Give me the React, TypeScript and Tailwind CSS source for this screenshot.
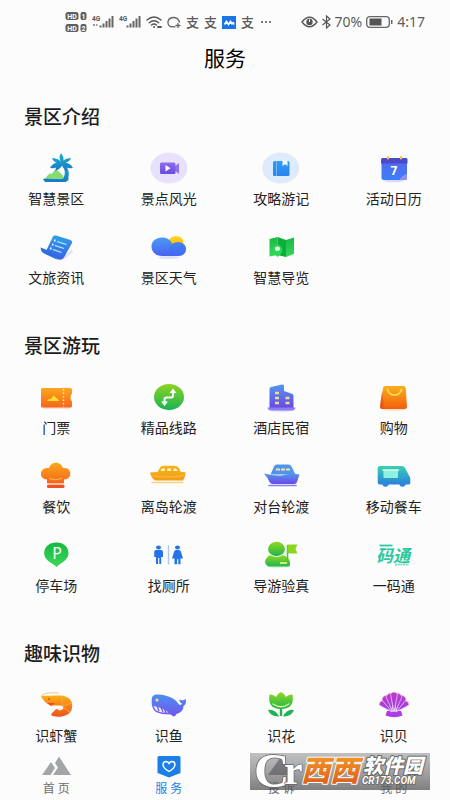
import type { ReactNode } from "react";

const cjk = "font-['Noto_Sans','Noto_Sans_CJK_SC',sans-serif]";

function Grad({ id, from, to }: { id: string; from: string; to: string }) {
  return (
    <linearGradient id={id} x1="0" y1="0" x2="0" y2="1">
      <stop offset="0" stopColor={from} />
      <stop offset="1" stopColor={to} />
    </linearGradient>
  );
}

function Palette() {
  return (
    <svg className="absolute h-0 w-0" aria-hidden="true">
      <defs>
        <Grad id="palm" from="#1fb5c0" to="#1a76cf" />
        <Grad id="sea" from="#7fdc7a" to="#1aa5a6" />
        <Grad id="violet" from="#8f6df0" to="#6a4be0" />
        <Grad id="book" from="#2f9df5" to="#2a84ee" />
        <Grad id="cal" from="#5a63f0" to="#3b7ff5" />
        <Grad id="news" from="#2f9fe6" to="#3a62ea" />
        <Grad id="cloud" from="#4b9af3" to="#4a63f6" />
        <Grad id="sun" from="#ffd52a" to="#f7b500" />
        <Grad id="map" from="#17b93f" to="#36d75c" />
        <Grad id="orange" from="#fba81c" to="#f6641b" />
        <Grad id="bag" from="#fcb01a" to="#f35c0e" />
        <Grad id="route" from="#8ed321" to="#18b455" />
        <Grad id="hotel" from="#5198ee" to="#6a48e6" />
        <Grad id="boat" from="#f7b416" to="#f49a1c" />
        <Grad id="truck" from="#37d3ae" to="#2a80dd" />
        <Grad id="leaf" from="#93d81d" to="#1db552" />
        <Grad id="park" from="#12b93f" to="#3fd65d" />
        <Grad id="whale" from="#4b8ff2" to="#7354ee" />
        <Grad id="shell" from="#c23ac6" to="#8f3ff0" />
        <Grad id="shrimp" from="#fbb015" to="#f04f1c" />
      </defs>
    </svg>
  );
}

const art: Record<string, ReactNode> = {
  palm: (
    <>
      <path d="M7 30q6-3 12-3t14 2l-1 3q-12 2-22 0z" fill="url(#sea)" />
      <path d="M10 29q3-6 6-4q3-6 6-3q5 3 6 8q-9 1-18-1z" fill="#86dc72" />
      <path d="M26 14c6 3 8 9 6 16l-2 3H9l-2-3h20c3-5 2-10-1-14z" fill="url(#palm)" />
      <path d="M26 15C23 10 23 7 25 4q4 5 2 11zM26 15q1-6 9-6q-1 4-9 6zM26 14q8-1 11 5q-7 1-11-4zM26 15q-2-6-10-6q1 5 10 6zM26 14q-8-2-12 5q7 1 12-4zM26 14q-6 2-7 8q6-2 8-7zM26 14q6 2 5 8q-5-3-5-7z" fill="url(#palm)" />
    </>
  ),
  video: (
    <>
      <ellipse cx="20" cy="19" rx="18.5" ry="15.5" fill="#e7e1fb" />
      <path d="M25 18l5-4v11l-5-4z" fill="#8d74ee" />
      <rect x="11" y="13.5" width="15.5" height="11.5" rx="1.5" fill="url(#violet)" />
      <path d="M16.5 16l5 3.3-5 3.3z" fill="#fff" />
    </>
  ),
  guide: (
    <>
      <ellipse cx="19.7" cy="19" rx="18.5" ry="15.5" fill="#deebfb" />
      <rect x="12" y="12" width="16.5" height="15" rx="1.5" fill="url(#book)" />
      <path d="M15.5 12v15" stroke="#83c1fa" strokeWidth="0.8" />
      <path d="M21.5 11.5h5v5.500l-2.500-1.700-2.500 1.700z" fill="#f2f8ff" />
    </>
  ),
  calendar: (
    <>
      <ellipse cx="20" cy="31.500" rx="10" ry="1.800" fill="#d5d9fb" />
      <rect x="7.500" y="9" width="25.500" height="22" rx="2" fill="url(#cal)" />
      <path d="M7 10.500q0-1.500 1.500-1.500h23.500q1.500 0 1.500 1.500v4H7z" fill="#4b4bc9" />
      <path d="M14 8v1.500M27 8v1.500" stroke="#f8c33a" strokeWidth="2.200" strokeLinecap="round" />
      <path d="M33 25v6h-7q0-4 7-6z" fill="#8f8df6" />
      <text x="20" y="26" textAnchor="middle" fontSize="12" fontWeight="700" fill="#fff" fontFamily="Noto Sans, sans-serif">7</text>
    </>
  ),
  news: (
    <>
      <path d="M24 32l12-11q2 3-1 5l-8 6z" fill="#e3e3fb" />
      <path d="M17 8.500q1-1.500 3-1l14.500 4.500q2 1 1.500 3L28 29.500Q25 33 21.500 31L10 23z" fill="url(#news)" />
      <path d="M4.700 19.500L11 22l10 5q-1.500 3.500 1 5L8 25.500q-3.500-2.500-3.300-6z" fill="#2d6fdc" />
      <path d="M21 13.500l9.500 3M19 17.500l9 3M17 21.500l8.500 3" stroke="#c9f1ff" strokeWidth="1.100" />
      <path d="M18 12.500h1.500M16 16.700h1.500M14 20.500h1.500" stroke="#fff" strokeWidth="1.800" />
    </>
  ),
  weather: (
    <>
      <ellipse cx="20" cy="29.500" rx="11" ry="1.500" fill="#dde1fc" />
      <ellipse cx="27" cy="14" rx="7.500" ry="6" fill="url(#sun)" />
      <path d="M13 9.500c5 0 9 2.500 10 6.500 6-4 14-1 14 5 0 4-3 7-8 7H13C7 28 2.500 24 2.500 18.500S7 9.500 13 9.500z" fill="url(#cloud)" />
      <path d="M23 16q-3 2-3 6 0 4 3 6h6c5 0 8-3 8-7 0-6-8-9-14-5z" fill="#3a72ef" opacity=".45" />
    </>
  ),
  map: (
    <>
      <path d="M8.500 11l8-2v18l-8 1.500z" fill="url(#map)" />
      <path d="M16.500 9l8.500 3v17l-8.500-2z" fill="#0fae3c" />
      <path d="M25 12l8-2.500V26l-8 3z" fill="url(#map)" />
      <path d="M16.500 29l-4-4q-2-5 1-7 3-2 6 0 3 3 1 7z" fill="#2cd657" />
      <ellipse cx="16.500" cy="20.800" rx="2.600" ry="2.200" fill="#e5fbe9" />
    </>
  ),
  ticket: (
    <>
      <rect x="7" y="27" width="27" height="4" rx="2" fill="#fde0cf" />
      <path d="M6.500 10H34q2 0 2 1.500v4q-1.500 1-1.500 4t1.500 4V28q0 1.500-2 1.500H6.500Q5 29.500 5 28V11.500Q5 10 6.500 10z" fill="url(#orange)" />
      <path d="M27.500 11v18" stroke="#fff1d0" strokeWidth="1.400" strokeDasharray="1.500 2" />
      <path d="M11 23q2-3 4-2l2.500-3.500 3 2.500q2 1 2.500 3z" fill="#ffe02d" />
    </>
  ),
  route: (
    <>
      <ellipse cx="20" cy="19" rx="15" ry="13" fill="url(#route)" />
      <path d="M15.500 25v-3.500q0-2 2-2H22q2 0 2-2V14" fill="none" stroke="#fff" strokeWidth="1.900" />
      <path d="M12 23.500h7L15.500 28zM20.500 15h7L24 10.500z" fill="#fff" />
    </>
  ),
  hotel: (
    <>
      <ellipse cx="20.500" cy="32" rx="12" ry="1.800" fill="#dfd9fb" />
      <path d="M8.500 30V11q0-1.500 1.500-2l11-2.500q2-.5 2 1.500v5l8.500 3q1 .5 1 2v12z" fill="url(#hotel)" />
      <path d="M6.500 29.500h28q-.5 3-3 3H10q-3 0-3.500-3z" fill="#8b7df2" />
      <path d="M14 15h4M14 20h4M14 25h4M24.500 20h4M24.500 25h4" stroke="#f5dc8b" strokeWidth="2.600" />
    </>
  ),
  bag: (
    <>
      <ellipse cx="20" cy="31.500" rx="12" ry="1.500" fill="#fbe0cf" />
      <path d="M11 8h18.500q2 0 2.200 2L33 28.500q0 2.500-2.500 2.500H9q-3 0-3-2.500L9 10q.3-2 2-2z" fill="url(#bag)" />
      <path d="M8 13l2 18H8q-2-.5-2-2.500z" fill="#de5314" opacity=".7" />
      <path d="M13.500 11.500q1.500 5.500 7 5.500t7-5.500" fill="none" stroke="#ffe05a" strokeWidth="1.700" strokeLinecap="round" />
    </>
  ),
  chef: (
    <>
      <path d="M11 22.500c-4 0-6.500-3-6-6.500s4-5.500 8-5c1-3.500 4-5.300 7-5.300s6 2 7 5.300c4-.5 7 1.500 7.300 5s-2 6.500-6.300 6.500v4H11z" fill="url(#orange)" />
      <path d="M13 21.500q6 2.500 13 0" stroke="#ffc04b" fill="none" />
      <rect x="11" y="27.500" width="17.500" height="3.500" rx="1.500" fill="#f0511f" />
      <path d="M11 27h17" stroke="#ffe0cb" strokeWidth=".9" />
    </>
  ),
  boat: (
    <>
      <path d="M3 25.500h31" stroke="#f8d27d" strokeWidth="1.500" strokeLinecap="round" />
      <path d="M1 15.500l7.500-.5 3-5q1-1.300 3-1.300h11q5 .5 6 6l5 .5q.5 4-2.500 8.300H6q-4-3-5-8z" fill="url(#boat)" />
      <path d="M2 18.500q14 3 33 0" fill="none" stroke="#f6bd3b" strokeWidth="1.200" />
      <path d="M11.500 14h3.800l1-2.500h-3.500zM18 14h4v-2.500h-3.500zM24.500 14h4.500l-2-2.500h-2.500z" fill="#fff5cf" />
    </>
  ),
  ship: (
    <>
      <path d="M8 28.500h27" stroke="#7f81ee" strokeWidth="1.600" strokeLinecap="round" />
      <path d="M9.500 17.500l3.500-8q.8-2 3-2h11.500q2 0 3 2l4 8z" fill="#4f95ed" />
      <path d="M3 16.500q12 3 20 1.500 8-2 15.500-.5L36 25q-.5 2-3 2H12q-2.500 0-3.500-2-1.500-4-5.500-8.500z" fill="url(#hotel)" />
      <path d="M15 12.500h14" stroke="#f7e19f" strokeWidth="2.200" strokeDasharray="4 1" />
    </>
  ),
  truck: (
    <>
      <path d="M6 9h22q2 0 3 2l4 7.500q1.300 1.500 1.300 3.500v4q0 1.500-1.800 1.500h-29Q3.700 27.500 3.700 25V11Q3.700 9 6 9z" fill="url(#truck)" />
      <ellipse cx="11.500" cy="27" rx="3" ry="2.800" fill="#2c86dc" />
      <ellipse cx="28.500" cy="27" rx="3" ry="2.800" fill="#2c86dc" />
      <rect x="9.500" y="13" width="14.500" height="8" fill="#8ff2de" />
      <path d="M8.500 13h16.500" stroke="#e4fff8" strokeWidth="1.400" />
      <path d="M28.500 13l3.500 6h-3.500z" fill="#35a9c9" />
    </>
  ),
  parking: (
    <>
      <path d="M20.500 6.500c7 0 12 4.500 12 10.500 0 5.500-4.500 8.500-9 11.500l-3 2.500-3-2.500c-5-3-9.300-6-9.300-11.500 0-6 5-10.500 12.300-10.500z" fill="url(#park)" />
      <text x="21" y="23" textAnchor="middle" fontSize="16" fill="#fff" fontFamily="Noto Sans, sans-serif">P</text>
    </>
  ),
  toilet: (
    <>
      <path d="M19.500 9.500v19" stroke="#a9c9f5" strokeWidth="1.400" />
      <ellipse cx="9.500" cy="11.500" rx="2.500" ry="2" fill="#2573e8" />
      <path d="M7 14h5q2 0 2 2v5h-1.800v7H10.300v-6h-1.200v6H7v-7H5.200v-5q0-2 1.800-2z" fill="#2573e8" />
      <ellipse cx="28.500" cy="11.500" rx="2.500" ry="2" fill="#2573e8" />
      <path d="M27 14h3q1.500 0 2 2l2 6.500h-2.500v5.800H29.300v-5h-1.200v5H25.500v-5.800H23l2-6.500q.5-2 2-2z" fill="#2573e8" />
    </>
  ),
  person: (
    <>
      <ellipse cx="17" cy="30.500" rx="11" ry="1.500" fill="#d3f3dc" />
      <ellipse cx="15.500" cy="13" rx="8.500" ry="7.200" fill="url(#leaf)" />
      <path d="M9 19q6.500 4 13 0 6 2 7 7v3q0 1.500-2 1.500H8Q4 29 4 25.500 5 21 9 19z" fill="url(#leaf)" />
      <path d="M26.500 9v17" stroke="#49c540" strokeWidth="1.600" />
      <path d="M26.500 8.500h10L34.500 13l2 4.500h-10z" fill="#8bd520" />
      <path d="M19 27h7" stroke="#eaf76f" strokeWidth="1.700" />
    </>
  ),
  code: (
    <>
      <path d="M5.500 9.500h13" stroke="#2cc8a3" strokeWidth="1.800" />
      <text x="2" y="26" fontSize="17" fontWeight="700" fontStyle="italic" fill="#2cc8a0" fontFamily="Noto Sans CJK SC, sans-serif">码通</text>
      <path d="M21 28.500h14" stroke="#7de0c0" strokeWidth="1.800" strokeDasharray="2 .7" />
    </>
  ),
  shrimp: (
    <>
      <path d="M6 9q4-3 17-2" stroke="#e6cf9a" fill="none" strokeWidth="1" />
      <path d="M4.700 9.500C10 10.500 17 9 25 9.500q11 1 11.300 10.500-.5 9-10.300 10.500-5 .7-9.500-.5-2-1-1-2.500l4.500-4.500q2-.5 3 1.500 5-1 4.500-3.500-1-2-4-1.500H15Q8 17 4.700 9.500z" fill="url(#shrimp)" />
      <path d="M27 9.500q-2 5 0 10.500M36 17l-9 3M34 26l-7-5" stroke="#ffa537" strokeWidth="1" fill="none" />
      <circle cx="13" cy="13" r=".8" fill="#8a3b10" />
      <path d="M11 17h8l-4 3z" fill="#e8501b" />
    </>
  ),
  whale: (
    <>
      <path d="M2.700 13Q3 8.500 8 8.500q6-.5 14 3 5 2 7.500 6.500 2.500 2 3.500-.5-3-1.500-2.500-4l3 1 3.200-1.500Q38 18 34.500 20q0 6-7 8-.5 2-3.500 2.500l-2-2q-10 0-15-2.500-5-3-4.300-13z" fill="url(#whale)" />
      <path d="M4.500 20q8 1 15 6.500-9 .5-13-2.500z" fill="#f0edff" />
      <path d="M8 20l2 5M12 21l2 5M15.500 23l1.500 4" stroke="#7159ea" strokeWidth="1.300" />
      <circle cx="8" cy="14" r="1.500" fill="#ffe08a" />
    </>
  ),
  flower: (
    <>
      <path d="M20 20v10" stroke="#25b150" strokeWidth="2.400" />
      <path d="M7 24q7-1.500 11 6.500Q10 31 7 24zM33 24q-7-1.500-11 6.500 8 .5 11-6.500z" fill="#20b354" />
      <path d="M8.500 8.500q4-.5 6.500 2.500 2-4 5-5 3 1 5 5 2.500-3 6.500-2.500 2.500 14.500-11.500 14.500Q6 23 8.500 8.500z" fill="url(#leaf)" />
      <path d="M12 18q8 5.500 16 0" fill="none" stroke="#d8f78a" strokeWidth="1.500" strokeLinecap="round" />
    </>
  ),
  shell: (
    <>
      <path d="M13 25h14l1.500 4.500q-8 3.500-17 0z" fill="#a93ce4" />
      <g fill="url(#shell)" stroke="#f2cdf6" strokeWidth=".7">
        <path d="M18 26L5 19q0-4 4-4.500z" />
        <path d="M22 26l13-7q0-4-4-4.500z" />
        <path d="M18 26L8 14q0-4 5-5z" />
        <path d="M22 26l10-12q0-4-5-5z" />
        <path d="M19 26l-7-15q1-4 5.500-4z" />
        <path d="M21 26l7-15q-1-4-5.500-4z" />
        <path d="M20 26L16.500 8q3.500-4 7 0z" />
      </g>
    </>
  ),
};

const sections = [
  {
    title: "景区介绍",
    items: [
      ["palm", "智慧景区"],
      ["video", "景点风光"],
      ["guide", "攻略游记"],
      ["calendar", "活动日历"],
      ["news", "文旅资讯"],
      ["weather", "景区天气"],
      ["map", "智慧导览"],
    ],
  },
  {
    title: "景区游玩",
    items: [
      ["ticket", "门票"],
      ["route", "精品线路"],
      ["hotel", "酒店民宿"],
      ["bag", "购物"],
      ["chef", "餐饮"],
      ["boat", "离岛轮渡"],
      ["ship", "对台轮渡"],
      ["truck", "移动餐车"],
      ["parking", "停车场"],
      ["toilet", "找厕所"],
      ["person", "导游验真"],
      ["code", "一码通"],
    ],
  },
  {
    title: "趣味识物",
    items: [
      ["shrimp", "识虾蟹"],
      ["whale", "识鱼"],
      ["flower", "识花"],
      ["shell", "识贝"],
    ],
  },
];

function Signal({ dim }: { dim?: boolean }) {
  return (
    <svg width="22" height="14" viewBox="0 0 22 14">
      <text x="0" y="5.500" fontSize="6.500" fontWeight="700" fill="#555" fontFamily="Roboto, sans-serif">4G</text>
      {dim && <path d="M1 10h2M4 10h1.500" stroke="#777" strokeWidth="1.500" />}
      <path d="M8.500 12.500v-2M11.500 12.500v-4M14.500 12.500V6M17.500 12.500V3.500M20.500 12.500V1" stroke="#666" strokeWidth="2" />
    </svg>
  );
}

function HdBadges() {
  return (
    <svg width="22" height="22" viewBox="0 0 22 22">
      {[1, 2].map((n) => (
        <g key={n}>
          <rect x="0.500" y={n * 12 - 11} width="13" height="8" rx="2.500" fill="#5d5d5d" />
          <rect x="15.500" y={n * 12 - 11} width="6" height="8" rx="2" fill="#5d5d5d" />
          <text x="7" y={n * 12 - 4.500} textAnchor="middle" fontSize="7" fontWeight="700" fill="#fff" fontFamily="Roboto, sans-serif">HD</text>
          <text x="18.500" y={n * 12 - 4.500} textAnchor="middle" fontSize="7" fontWeight="700" fill="#fff" fontFamily="Roboto, sans-serif">{n}</text>
        </g>
      ))}
    </svg>
  );
}

function StatusBar() {
  const pay = <span className="text-[13px] leading-4 font-medium">支</span>;
  return (
    <header className="flex h-11 items-center justify-between pr-[25px] pl-[65px] text-[#5c5c5c]">
      <div className="flex items-center gap-[5px]">
        <HdBadges />
        <Signal dim />
        <Signal />
        <svg width="16" height="14" viewBox="0 0 16 14" fill="none" stroke="#555" strokeWidth="1.400" strokeLinecap="round">
          <path d="M1 5q7-6 14 0M3.300 7.700q4.700-4 9.400 0M5.500 10q2.500-2 5 0" />
          <path d="M8 12h.1M12 12h3" strokeWidth="1.800" />
        </svg>
        <svg width="14" height="14" viewBox="0 0 14 14" fill="none" stroke="#666" strokeWidth="1.300" strokeLinecap="round">
          <path d="M3 11.500q-2.500-2-2-5Q2 2.500 6.500 2.500T12.500 7M3 11.500l5 .3M11 8.500v4M9 10.500h4" />
        </svg>
        {pay}
        {pay}
        <svg width="14" height="13" viewBox="0 0 14 13">
          <rect width="14" height="13" fill="#1976e6" />
          <path d="M2.500 8.500L4.500 5.500l2 3L8.500 5.500l2 3M11 6l1 2.500" fill="none" stroke="#fff" strokeWidth="1.700" />
        </svg>
        {pay}
        <svg width="13" height="4" viewBox="0 0 13 4" fill="#555">
          <circle cx="3" cy="2" r="1" />
          <circle cx="7" cy="2" r="1" />
          <circle cx="11" cy="2" r="1" />
        </svg>
      </div>
      <div className="flex items-center gap-1 font-['Noto_Sans',sans-serif] text-sm">
        <svg width="17" height="12" viewBox="0 0 17 12">
          <path d="M1 6q7.500-9.500 15 0-7.500 9.500-15 0z" fill="none" stroke="#555" strokeWidth="1.400" />
          <circle cx="8.500" cy="6" r="3.200" fill="#555" />
          <path d="M8.500 6V3.500" stroke="#fff" />
        </svg>
        <svg width="9" height="14" viewBox="0 0 9 14" fill="none" stroke="#555" strokeWidth="1.200">
          <path d="M.5 4l7.500 6-3.500 3V1L8 4 .5 10" />
        </svg>
        <span>70%</span>
        <svg width="27" height="12" viewBox="0 0 27 12">
          <rect x=".7" y=".7" width="22.600" height="10.600" rx="3" fill="none" stroke="#666" strokeWidth="1.300" />
          <rect x="3.500" y="2.500" width="12" height="7" fill="#555" />
          <path d="M25.700 4v4" stroke="#666" strokeWidth="1.500" />
        </svg>
        <span>4:17</span>
      </div>
    </header>
  );
}

const tabs: { label: string; active?: boolean; icon: ReactNode }[] = [
  { label: "首 页", icon: <path d="M1 20L10 7l4 6-4.500 7zM12 20l5-7.500-3-4.500 4-6.500L30 20z" fill="#a3a5a8" /> },
  {
    label: "服 务",
    active: true,
    icon: (
      <>
        <path d="M5 1h20q1.500 0 1.500 1.500V18L15 22.500 3.500 18V2.500Q3.500 1 5 1z" fill="#1b7fe6" />
        <path d="M15 16.500q-6-3.500-6-7 .3-3 3-3 2 0 3 2 1-2 3-2 2.700 0 3 3 0 3.500-6 7z" fill="none" stroke="#fff" strokeWidth="1.400" />
      </>
    ),
  },
  { label: "投 诉", icon: <path d="M2 20L14 3l12 17z" fill="#85878a" /> },
  { label: "我 的", icon: null },
];

function Watermark() {
  return (
    <svg className="pointer-events-none absolute top-[3px] right-5 overflow-visible" width="180" height="37" viewBox="0 0 180 37">
      <defs>
        <linearGradient id="band" x1="0" y1="0" x2="0" y2="1">
          <stop offset="0" stopColor="#777" stopOpacity=".45" />
          <stop offset="1" stopColor="#555" stopOpacity=".75" />
        </linearGradient>
        <Grad id="west" from="#f8a52c" to="#d9571b" />
      </defs>
      <rect width="180" height="37" fill="url(#band)" />
      <g paintOrder="stroke" strokeLinejoin="round">
        <g fontFamily="Liberation Serif, serif" fontWeight="700" fill="#fff" stroke="#666" strokeWidth="1.500">
          <text x="4" y="34" fontSize="49">C</text>
          <text x="34" y="31" fontSize="42">r</text>
        </g>
        <g fontFamily="Noto Sans CJK SC, sans-serif" fontWeight="900" fontStyle="italic">
          <text x="51" y="28" fontSize="29" fill="url(#west)" stroke="#fff" strokeWidth="2">西西</text>
          <text x="113" y="20" fontSize="20" fill="#fff" stroke="#666" strokeWidth="2">软件园</text>
        </g>
        <text x="112" y="31" fontSize="10" fontWeight="700" fontStyle="italic" fontFamily="Roboto, sans-serif" fill="#fff" stroke="#666" strokeWidth="1.500">CR173.COM</text>
      </g>
    </svg>
  );
}

export default function App() {
  return (
    <div className={`flex min-h-screen flex-col bg-[#fcfcfc] text-[#222] ${cjk}`}>
      <Palette />
      <StatusBar />
      <h1 className="text-center text-[21px] leading-7 text-black">服务</h1>
      <main className="mt-[31px] flex flex-col gap-11">
        {sections.map((section) => (
          <section key={section.title}>
            <h2 className="px-6 text-[19px] leading-7 font-medium text-[#1c1c1c]">{section.title}</h2>
            <div className="mt-[18px] grid grid-cols-4 gap-y-[19px]">
              {section.items.map(([icon, label]) => (
                <button key={label} type="button" className="flex flex-col items-center gap-1">
                  <svg width="40" height="36" viewBox="0 0 40 36" aria-hidden="true">
                    {art[icon]}
                  </svg>
                  <span className="text-sm leading-5">{label}</span>
                </button>
              ))}
            </div>
          </section>
        ))}
      </main>
      <nav className="sticky bottom-0 mt-auto grid h-[50px] grid-cols-4 bg-[#fcfcfc] pt-[5px]">
        {tabs.map((tab) => (
          <button
            key={tab.label}
            type="button"
            className={`flex flex-col items-center gap-0.5 text-xs leading-4 ${tab.active ? "text-[#1b7fe6]" : "text-[#6d6d6d]"}`}
          >
            <svg width="30" height="24" viewBox="0 0 30 24" aria-hidden="true">
              {tab.icon}
            </svg>
            <span>{tab.label}</span>
          </button>
        ))}
        <Watermark />
      </nav>
    </div>
  );
}
